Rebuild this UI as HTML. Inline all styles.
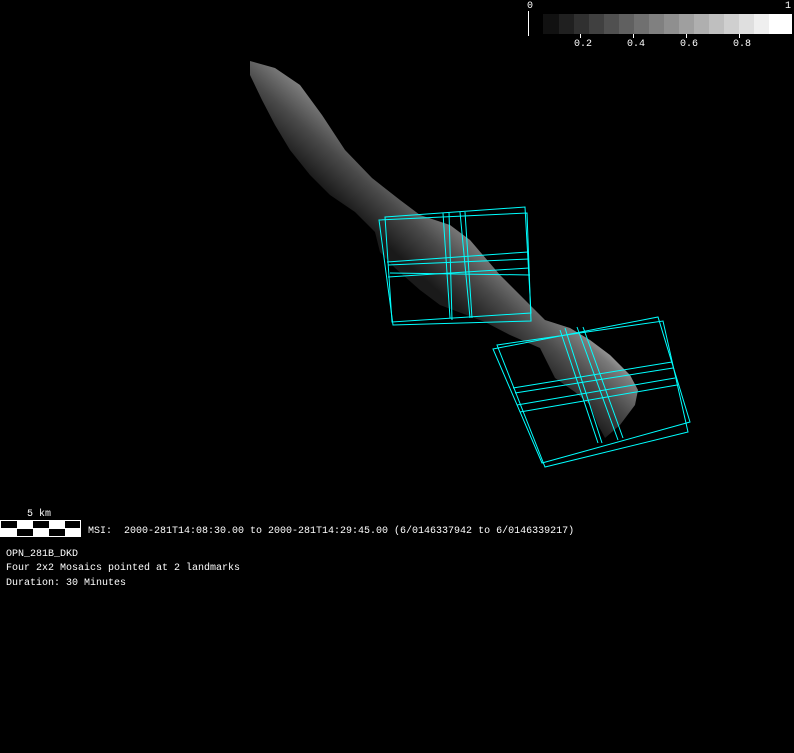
<!DOCTYPE html>
<html><head><style>
html,body{margin:0;padding:0;background:#000;width:794px;height:753px;overflow:hidden}
.t{position:absolute;color:#fff;font-family:"Liberation Mono",monospace;font-size:10px;line-height:12px;white-space:pre}
</style></head><body>
<svg width="794" height="753" style="position:absolute;left:0;top:0">
<defs>
<linearGradient id="g" gradientUnits="userSpaceOnUse" x1="50" y1="-55" x2="100" y2="-111">
<stop offset="0" stop-color="#1a1a1a"/><stop offset="0.45" stop-color="#4a4a4a"/><stop offset="0.8" stop-color="#7a7a7a"/><stop offset="1" stop-color="#b0b0b0"/>
</linearGradient>
</defs>
<polygon fill="url(#g)" points="250,61 275,68 300,85 322,115 345,150 372,178 400,200 420,215 450,225 470,240 500,275 530,305 545,320 570,328 590,340 610,355 630,375 638,390 635,405 620,425 605,438 598,425 590,405 575,392 555,378 540,348 510,335 485,322 440,305 420,290 395,268 380,252 375,232 355,212 330,195 310,175 290,150 275,125 262,100 250,75"/>
<g fill="none" stroke="#0ff" stroke-width="1">
<polygon points="379,220 527,213 531,321 393,325"/>
<polygon points="385,217 525,207 531,313 392,322"/>
<line x1="443" y1="213" x2="450" y2="318"/><line x1="449" y1="212" x2="452" y2="320"/>
<line x1="460" y1="212" x2="470" y2="318"/><line x1="465" y1="212" x2="472" y2="318"/>
<line x1="387" y1="262" x2="528" y2="252"/><line x1="388" y1="265" x2="529" y2="259"/>
<line x1="388" y1="277" x2="529" y2="268"/><line x1="390" y1="273" x2="530" y2="275"/>
<polygon points="493,349 658,317 690,422 542,463"/>
<polygon points="497,345 663,321 688,432 545,467"/>
<line x1="560" y1="330" x2="598" y2="443"/><line x1="565" y1="328" x2="602" y2="443"/>
<line x1="577" y1="327" x2="618" y2="440"/><line x1="583" y1="327" x2="623" y2="438"/>
<line x1="513" y1="388" x2="672" y2="362"/><line x1="515" y1="393" x2="673" y2="368"/>
<line x1="517" y1="405" x2="675" y2="378"/><line x1="520" y1="412" x2="677" y2="385"/>
</g>
<line x1="528.5" y1="11" x2="528.5" y2="36" stroke="#fff"/>
<g>
<rect x="543" y="14" width="16" height="20" fill="#111"/>
<rect x="559" y="14" width="15" height="20" fill="#202020"/>
<rect x="574" y="14" width="15" height="20" fill="#303030"/>
<rect x="589" y="14" width="15" height="20" fill="#404040"/>
<rect x="604" y="14" width="15" height="20" fill="#505050"/>
<rect x="619" y="14" width="15" height="20" fill="#606060"/>
<rect x="634" y="14" width="15" height="20" fill="#707070"/>
<rect x="649" y="14" width="15" height="20" fill="#808080"/>
<rect x="664" y="14" width="15" height="20" fill="#8f8f8f"/>
<rect x="679" y="14" width="15" height="20" fill="#9f9f9f"/>
<rect x="694" y="14" width="15" height="20" fill="#afafaf"/>
<rect x="709" y="14" width="15" height="20" fill="#bfbfbf"/>
<rect x="724" y="14" width="15" height="20" fill="#cfcfcf"/>
<rect x="739" y="14" width="15" height="20" fill="#dfdfdf"/>
<rect x="754" y="14" width="15" height="20" fill="#efefef"/>
<rect x="769" y="14" width="23" height="20" fill="#fff"/>
</g>
<g stroke="#fff"><line x1="580.5" y1="34" x2="580.5" y2="38"/><line x1="633.5" y1="34" x2="633.5" y2="38"/><line x1="686.5" y1="34" x2="686.5" y2="38"/><line x1="739.5" y1="34" x2="739.5" y2="38"/></g>
<rect x="0" y="520" width="81" height="17" fill="#fff"/>
<g fill="#000">
<rect x="1" y="521" width="16" height="7"/><rect x="33" y="521" width="16" height="7"/><rect x="65" y="521" width="15" height="7"/>
<rect x="17" y="529" width="16" height="7"/><rect x="49" y="529" width="16" height="7"/>
</g>
</svg>
<div class="t" style="left:527px;top:1px">0</div>
<div class="t" style="left:785px;top:1px">1</div>
<div class="t" style="left:574px;top:39px">0.2</div>
<div class="t" style="left:627px;top:39px">0.4</div>
<div class="t" style="left:680px;top:39px">0.6</div>
<div class="t" style="left:733px;top:39px">0.8</div>
<div class="t" style="left:27px;top:509px">5 km</div>
<div class="t" style="left:88px;top:526px">MSI:  2000-281T14:08:30.00 to 2000-281T14:29:45.00 (6/0146337942 to 6/0146339217)</div>
<div class="t" style="left:6px;top:549px">OPN_281B_DKD</div>
<div class="t" style="left:6px;top:563px">Four 2x2 Mosaics pointed at 2 landmarks</div>
<div class="t" style="left:6px;top:578px">Duration: 30 Minutes</div>
</body></html>
